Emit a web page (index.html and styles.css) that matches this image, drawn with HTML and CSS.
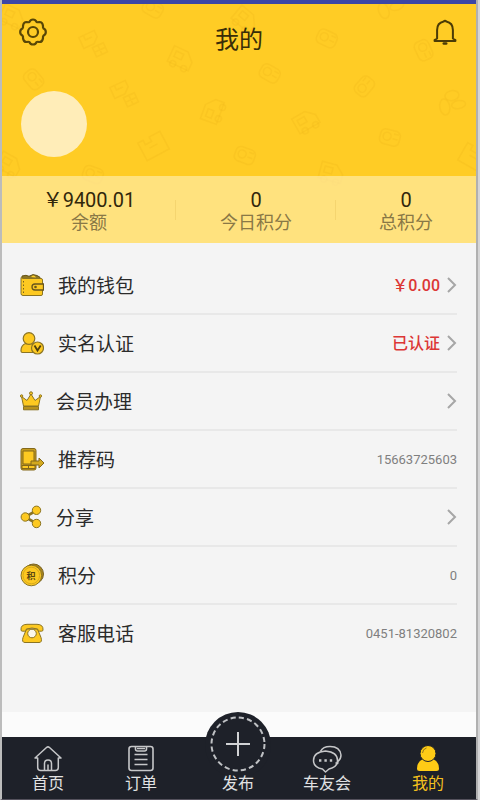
FILE: index.html
```html
<!DOCTYPE html>
<html lang="zh-CN">
<head>
<meta charset="utf-8">
<meta name="viewport" content="width=device-width, initial-scale=1">
<title>我的</title>
<link rel="stylesheet" href="styles.css">
</head>
<body>
<div class="app">
  <div class="hero">
    <svg class="pattern" viewBox="0 0 474 239" preserveAspectRatio="xMidYMin slice" aria-hidden="true">
      <defs>
        <g id="car"><path d="M-12-8h15l8 8v9h-23zM-8-4h8v6h-8z"/><circle cx="-6" cy="9" r="3"/><circle cx="6" cy="9" r="3"/></g>
        <g id="seat"><path d="M-11-10H6v7L0 2h-11zM-6-10v5h7M-3 5h12v10H-3zM-3 10h12M3 5v10"/></g>
        <g id="box"><path d="M-13-8h6v5h7v-5h12v20h-25zM-5 2h9"/></g>
        <g id="leaf"><ellipse cx="-6" cy="4" rx="5" ry="8"/><ellipse cx="3" cy="-6" rx="7" ry="5"/><ellipse cx="8" cy="4" rx="7" ry="4"/></g>
        <g id="pad"><rect x="-10" y="-7" width="20" height="15" rx="5"/><circle cx="-3" cy="0" r="4"/><path d="M3-4h5M3 1h5"/></g>
      </defs>
      <use href="#car" transform="translate(11 12) rotate(25)"/>
      <use href="#pad" transform="translate(151 4) rotate(30)"/>
      <use href="#seat" transform="translate(91 38) rotate(-25)"/>
      <use href="#car" transform="translate(180 54) rotate(25)"/>
      <use href="#pad" transform="translate(32 75) rotate(50)"/>
      <use href="#seat" transform="translate(122 88) rotate(-25)"/>
      <use href="#car" transform="translate(210 106) rotate(-70)"/>
      <use href="#box" transform="translate(151 140) rotate(-28)"/>
      <use href="#car" transform="translate(8 160) rotate(30)"/>
      <use href="#pad" transform="translate(91 170) rotate(20)"/>
      <use href="#car" transform="translate(244 15) rotate(40)"/>
      <use href="#pad" transform="translate(325 34) rotate(25)"/>
      <use href="#leaf" transform="translate(386 1) rotate(-20)"/>
      <use href="#pad" transform="translate(422 46) rotate(65)"/>
      <use href="#pad" transform="translate(268 69) rotate(30)"/>
      <use href="#pad" transform="translate(362 82) rotate(-50)"/>
      <use href="#car" transform="translate(304 116) rotate(-30)"/>
      <use href="#leaf" transform="translate(448 98) rotate(-10)"/>
      <use href="#pad" transform="translate(388 133) rotate(15)"/>
      <use href="#pad" transform="translate(243 151) rotate(20)"/>
      <use href="#car" transform="translate(330 168) rotate(15)"/>
      <use href="#box" transform="translate(473 152) rotate(30)"/>
    </svg>
    <header class="topbar">
      <button class="icon-button" type="button" aria-label="设置">
        <svg width="28" height="28" viewBox="0 0 28 28" fill="none" stroke="#594706" stroke-width="2.2" stroke-linejoin="round">
          <path d="M10.500 3.800Q11.500 1.500 14 1.500t3.500 2.300Q18.500 4.600 20 4q3.500-.3 4 4-.3 1.300.6 2.500 2.200 1 2.200 3.500t-2.200 3.500q-.9 1.200-.6 2.500-.5 4.300-4 4-1.500-.6-2.500.2-1 2.300-3.500 2.300t-3.500-2.300q-1-.8-2.500-.2-3.500.3-4-4 .3-1.300-.6-2.500Q1.200 16.500 1.200 14t2.200-3.500Q4.300 9.300 4 8q.5-4.300 4-4 1.500.6 2.500-.2z"/>
          <circle cx="14" cy="14" r="5"/>
        </svg>
      </button>
      <h1 class="title">我的</h1>
      <button class="icon-button" type="button" aria-label="消息">
        <svg width="28" height="28" viewBox="0 0 28 28" fill="none" stroke="#4b3b06" stroke-width="2" stroke-linejoin="round" stroke-linecap="round">
          <path d="M12.700 3.500q1.300-1.600 2.600 0 6.600 1.300 6.600 8.500v8.500l2.500 1.500v1H3.600v-1l2.500-1.500V12q0-7.200 6.600-8.500z"/>
          <path d="M12.800 25.500h2.400" stroke-width="2.600"/>
        </svg>
      </button>
    </header>
    <div class="avatar" role="img" aria-label="头像"></div>
    <dl class="stats">
      <div class="stat"><dt>余额</dt><dd>￥9400.01</dd></div>
      <div class="stat"><dt>今日积分</dt><dd>0</dd></div>
      <div class="stat"><dt>总积分</dt><dd>0</dd></div>
    </dl>
  </div>

  <main class="panel">
    <ul class="menu">
      <li><a class="row" href="#wallet">
        <svg class="row-icon" width="24" height="24" viewBox="0 0 24 24">
          <path d="M2 4.500V3l4-.7 3 1 4-1.700 4 .9 3 1.800v3H3z" fill="#8c7524" stroke="#665417"/>
          <path d="M11 4q3-3 5 .5" fill="#ffd02b"/>
          <path d="M1 4.500l2 1h18q1.500 0 1.500 1.500v14q0 1.500-1.500 1.500H3q-2 0-2-2z" fill="#fdc921" stroke="#8b7423"/>
          <path d="M3.500 8v12" stroke="#7c651c" stroke-dasharray="1.500 2"/>
          <path d="M15 11h8.500v6H15q-3 0-3-3t3-3z" fill="#fdc921" stroke="#68551c" stroke-width="1.300"/><circle cx="15.500" cy="14" r="1.300" fill="#68551c"/>
        </svg>
        <span class="label">我的钱包</span><span class="value alert">￥0.00</span>
        <svg class="chevron" width="10" height="16" viewBox="0 0 10 16"><path d="m1 1 7 7-7 7"/></svg></a></li>
      <li><a class="row" href="#identity">
        <svg class="row-icon" width="24" height="24" viewBox="0 0 24 24" fill="#fdc921" stroke="#8b7423" stroke-width="1.200">
          <path d="M5.500 12.500q-4.500 2-4.500 7V20q0 1.500 1.500 1.500H15V13z"/>
          <circle cx="9" cy="7.500" r="5.800"/><circle cx="17.500" cy="17" r="6"/>
          <path d="m14.500 14.500 3 5 3.200-5" fill="none" stroke="#4d3e0e" stroke-width="1.800"/>
        </svg>
        <span class="label">实名认证</span><span class="value alert">已认证</span>
        <svg class="chevron" width="10" height="16" viewBox="0 0 10 16"><path d="m1 1 7 7-7 7"/></svg></a></li>
      <li><a class="row" href="#membership">
        <svg class="row-icon" width="22" height="24" viewBox="0 0 22 24" fill="#fdc921" stroke="#8b7423">
          <path d="m3.500 17-2-9.500 5.500 4L11 5l4 6.500 5.500-4-2 9.500z"/><circle cx="1.600" cy="7" r="1.200"/><circle cx="11" cy="4.300" r="1.500"/><circle cx="20.400" cy="7" r="1.200"/>
          <path d="M3.500 17.500h15v3.300h-15z" fill="#b8921d"/>
        </svg>
        <span class="label">会员办理</span>
        <svg class="chevron" width="10" height="16" viewBox="0 0 10 16"><path d="m1 1 7 7-7 7"/></svg></a></li>
      <li><div class="row">
        <svg class="row-icon" width="24" height="24" viewBox="0 0 24 24" fill="#fdc921" stroke="#84691a">
          <rect x="1" y="1.500" width="15" height="21.500" rx="2" fill="#c39b20"/><path d="M3 4h11v13H3zM2 18.500h13v3H2z"/>
          <path d="M8.500 18.500v3" fill="none"/><path d="M11 14h8v-3l5 5-5 5v-3h-8z" fill="#d3a91f"/>
        </svg>
        <span class="label">推荐码</span><span class="value">15663725603</span></div></li>
      <li><a class="row" href="#share">
        <svg class="row-icon" width="22" height="24" viewBox="0 0 22 24" fill="#fdc921" stroke="#8b7423">
          <path d="M16.500 5.500 5 12l11.500 6.500" fill="none" stroke-width="2.600"/><circle cx="5.300" cy="12" r="4.200"/><circle cx="16.500" cy="5.300" r="4.200"/><circle cx="16.500" cy="18.500" r="4.200"/>
        </svg>
        <span class="label">分享</span>
        <svg class="chevron" width="10" height="16" viewBox="0 0 10 16"><path d="m1 1 7 7-7 7"/></svg></a></li>
      <li><div class="row">
        <svg class="row-icon" width="24" height="24" viewBox="0 0 24 24">
          <circle cx="13.500" cy="11" r="10" fill="#a9861d" stroke="#776020"/><circle cx="11.300" cy="12.500" r="10.300" fill="#fdc921" stroke="#8b7423"/><circle cx="11.300" cy="12.500" r="8.300" fill="none" stroke="#d8aa1c"/>
          <text class="coin-text" x="11" y="16" text-anchor="middle">积</text>
        </svg>
        <span class="label">积分</span><span class="value">0</span></div></li>
      <li><div class="row">
        <svg class="row-icon" width="24" height="24" viewBox="0 0 24 24" fill="#fdc921" stroke="#8b7423">
          <path d="M6.500 8h11l3.500 8.500q1.500 5-2 5H5q-3.500 0-2-5z"/>
          <path d="M1 9q-.5-5.500 6-5.700h10Q23.500 3.500 23 9q0 1.200-1.500 1.200h-2.300q-1.500 0-1.500-2.200Q12 6 6.300 8q0 2.200-1.500 2.200H2.500Q1 10.200 1 9z"/>
          <circle cx="12" cy="12.500" r="4.300" fill="#fbf7e8"/>
        </svg>
        <span class="label">客服电话</span><span class="value">0451-81320802</span></div></li>
    </ul>
  </main>

  <nav class="tabs" aria-label="主导航">
    <a class="tab" href="#home">
      <svg width="28" height="28" viewBox="0 0 28 28" fill="none" stroke="#c6c7c9" stroke-width="1.500" stroke-linejoin="round" stroke-linecap="round">
        <path d="M1 13 12.500 2.500q1.500-1.300 3 0L27 13h-2.700v9.500q0 3-3 3H6.700q-3 0-3-3V13z"/><path d="M10.500 25v-6.500q0-3.500 3.500-3.500t3.500 3.500V25M14 20v5"/>
      </svg><span>首页</span></a>
    <a class="tab" href="#orders">
      <svg width="28" height="28" viewBox="0 0 28 28" fill="none" stroke="#c6c7c9" stroke-width="1.600" stroke-linejoin="round">
        <rect x="2" y="1.500" width="24" height="24" rx="2.500"/><path d="M8.500 1.500V4q0 2 2 2h7q2 0 2-2V1.500M10 3.500h8"/><path d="M7.500 9.500h13M7.500 14.500h13M7.500 19.500h13"/>
      </svg><span>订单</span></a>
    <a class="tab publish" href="#publish">
      <svg width="66" height="66" viewBox="0 0 66 66" fill="none">
        <circle cx="33" cy="33" r="33" fill="#1e2129"/><circle cx="33" cy="32" r="26.500" stroke="#bfc1c4" stroke-width="2" stroke-dasharray="5.200 3.125"/>
        <path d="M21 32h24M33 20v24" stroke="#d1d2d4" stroke-width="2"/>
      </svg><span>发布</span></a>
    <a class="tab" href="#community">
      <svg width="30" height="28" viewBox="0 0 30 28" fill="none" stroke="#c6c7c9" stroke-width="1.500" stroke-linejoin="round">
        <path d="M8.500 6.300Q11 1.500 18 1.500q10 0 11 8.500 0 4-3 6.300l-.3 2.200-2.200-.8"/><path d="M13.500 6q12 1 12 9.500 0 6.500-8.500 8.500l-3.500 3-3-3Q1.500 22.500 1.500 15.500 1.500 7 13.500 6z"/>
        <path d="M7 15.500h2.400m3 0h2.400m3 0h2.400" stroke-width="2.400"/>
      </svg><span>车友会</span></a>
    <a class="tab active" href="#mine" aria-current="page">
      <svg width="28" height="28" viewBox="0 0 28 28" fill="#fecb16">
        <path d="M9 14h10q6 2.500 6 9.500 0 2.500-2.500 2.500h-17Q3 26 3 23.500 3 16.500 9 14z"/><circle cx="14" cy="8.500" r="8" stroke="#1e2129"/><path d="M8.500 8q.3-4 4-5" fill="none" stroke="#96791b"/>
      </svg><span>我的</span></a>
  </nav>
</div>
</body>
</html>
```
FILE: styles.css
```css
* { box-sizing: border-box; }

body {
  margin: 0;
  background: #d5d5d6;
  color: #2b2b2b;
  font-family: Roboto, "Noto Sans CJK SC", sans-serif;
}

a { color: inherit; text-decoration: none; }
svg { display: block; flex: none; }

.app {
  display: flex;
  flex-direction: column;
  min-height: 100vh;
  margin-right: 2px;
  border-left: 2px solid #bcbcbc;
  border-right: 2px solid #b0b0b0;
  border-bottom: 1px solid #55525d;
  background: #fbfbfb;
}

.hero {
  position: relative;
  overflow: hidden;
  border-top: 4px solid #3c46a5;
  background: #ffcc25;
}

.pattern {
  position: absolute;
  inset: 0;
  width: 100%;
  height: 100%;
  fill: none;
  stroke: #f2b91c;
  stroke-opacity: 0.35;
  stroke-width: 1.5;
}

.topbar {
  position: relative;
  display: flex;
  justify-content: space-between;
  align-items: flex-start;
  padding: 14px 17px 0;
}

.icon-button {
  padding: 0;
  border: 0;
  background: none;
  cursor: pointer;
}

.title {
  margin: 4px 0 0;
  color: #382d08;
  font-size: 24px;
  font-weight: 400;
  line-height: 36px;
}

.avatar {
  position: relative;
  width: 66px;
  height: 66px;
  margin: 33px 0 19px 19px;
  border-radius: 50%;
  background: #ffedb8;
}

.stats {
  position: relative;
  display: grid;
  grid-template-columns: 174fr 160fr 140fr;
  margin: 0;
  padding: 12px 0 9px;
  background: rgba(255, 236, 170, 0.68);
}

.stat {
  display: flex;
  flex-direction: column-reverse;
  align-items: center;
  background: linear-gradient(#f5d56f, #f5d56f) right 12px / 1px 20px no-repeat;
}

.stat:last-child { background: none; }

.stat dt {
  color: #897846;
  font-size: 18px;
  line-height: 22px;
}

.stat dd {
  margin: 0;
  color: #31270b;
  font-size: 20px;
  line-height: 24px;
}

.panel {
  padding: 13px 19px 51px 18px;
  background: #f4f4f4;
}

.menu {
  margin: 0;
  padding: 0;
  list-style: none;
}

.menu li + li { border-top: 2px solid #e8e8e8; }

.row {
  display: flex;
  align-items: center;
  min-height: 56px;
}

.menu li:first-child .row { min-height: 57px; }

.label {
  flex: 1;
  margin-left: 14px;
  padding-top: 4px;
  font-size: 19px;
  line-height: 28px;
}

.value {
  padding-top: 2px;
  color: #7f7f7f;
  font-size: 13px;
  line-height: 20px;
}

.alert {
  margin-right: 7px;
  color: #dc3736;
  font-size: 16px;
  font-weight: 500;
}

.chevron {
  fill: none;
  stroke: #a6a6a6;
  stroke-width: 2;
}

.coin-text {
  fill: #594611;
  font-size: 9px;
  font-weight: 700;
}

.tabs {
  display: grid;
  grid-template-columns: 64fr 122fr 72fr 106fr 96fr;
  grid-template-rows: 58px;
  align-items: end;
  margin-top: auto;
  padding: 0 0 4px 14px;
  background: #1e2129;
}

.tab {
  display: flex;
  flex-direction: column;
  align-items: center;
  color: #e1e2e3;
  font-size: 16px;
  line-height: 22px;
}

.publish svg { margin-bottom: -5px; }

.tab.active { color: #f4c01e; }
```
